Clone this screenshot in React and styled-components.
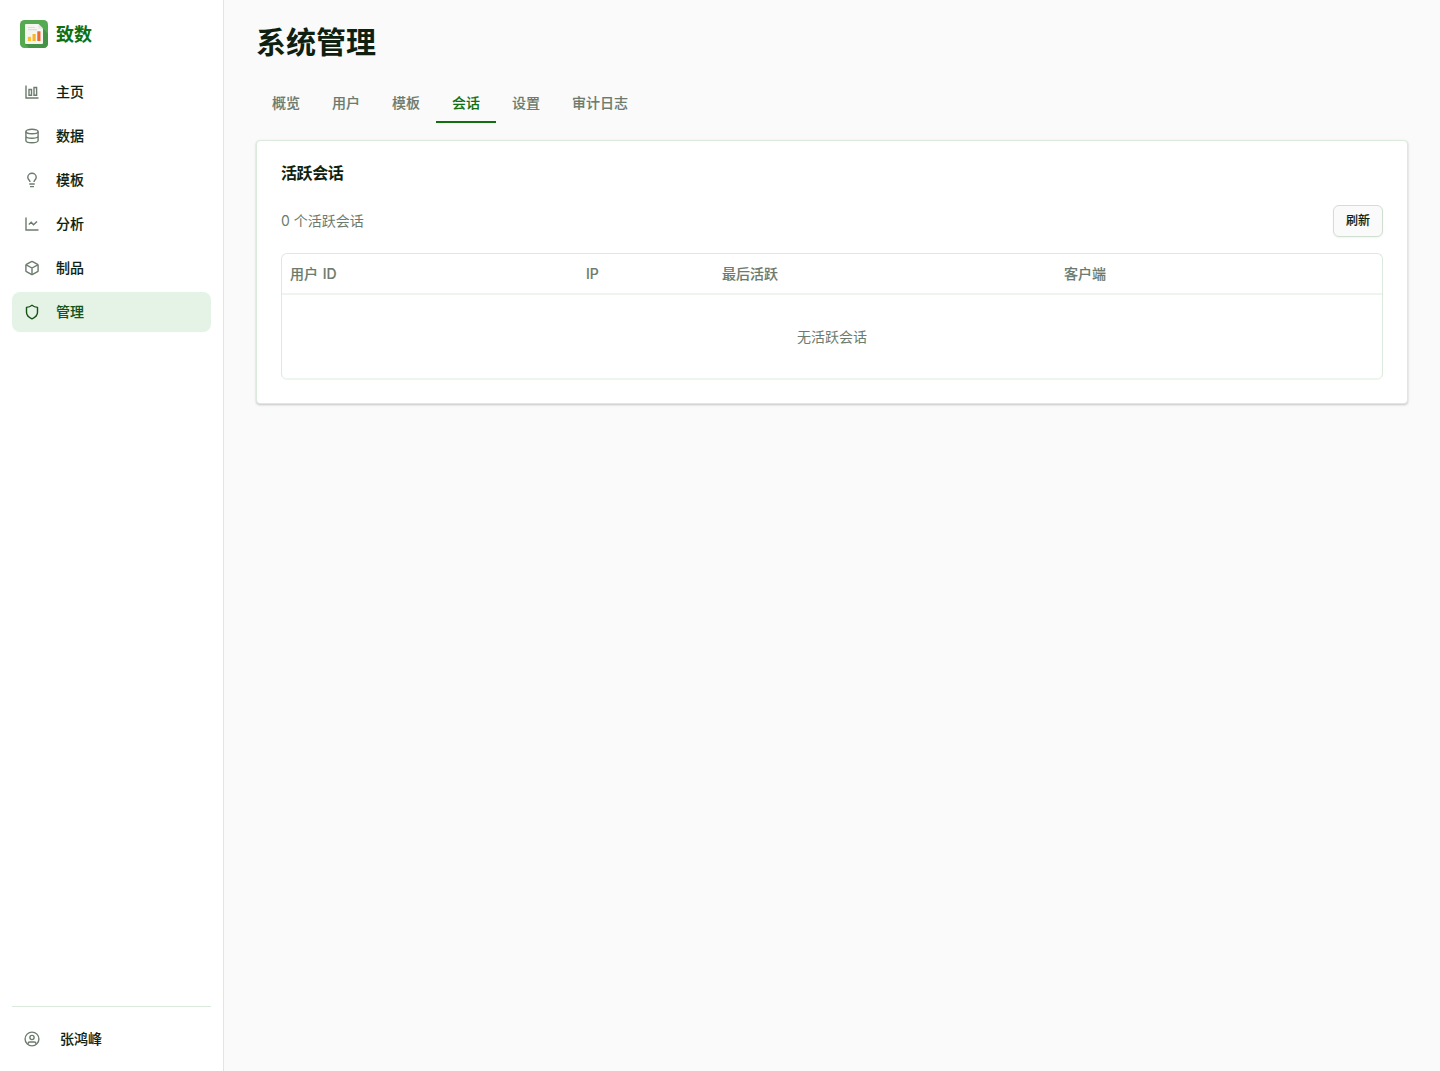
import React from "react";
import styled, { createGlobalStyle } from "styled-components";

const Global = createGlobalStyle`
  *, *::before, *::after { box-sizing: border-box; }
  body {
    margin: 0;
    background: #fafafa;
    color: #0f1f10;
    font-family: Inter, "Noto Sans CJK SC", sans-serif;
    font-size: 14px;
    line-height: 20px;
    -webkit-font-smoothing: antialiased;
  }
`;

const Shell = styled.div`
  display: flex;
  min-height: 100vh;
`;

const Sidebar = styled.aside`
  display: flex;
  flex-direction: column;
  width: 224px;
  flex: none;
  padding: 20px 12px 12px;
  background: #fff;
  border-right: 1px solid #dceadd;
`;

const Brand = styled.div`
  display: flex;
  align-items: center;
  gap: 8px;
  height: 28px;
  padding: 0 8px;
  margin-bottom: 24px;
  color: #107010;
  font-size: 18px;
  font-weight: 700;
`;

const BrandName = styled.span`
  padding-top: 2px;
`;

const Nav = styled.nav`
  display: flex;
  flex-direction: column;
  gap: 4px;
  flex: 1;
`;

const NavItem = styled.a`
  display: flex;
  align-items: center;
  gap: 16px;
  height: 40px;
  padding: 0 12px;
  border-radius: 8px;
  font-weight: 500;
  -webkit-text-stroke: 0.12px currentColor;
  color: ${(p) => (p.$active ? "#155215" : "#0f1f10")};
  background: ${(p) => (p.$active ? "#e4f3e5" : "transparent")};

  svg {
    color: ${(p) => (p.$active ? "#155215" : "#6c7b6d")};
  }
`;

const Account = styled.div`
  display: flex;
  align-items: center;
  gap: 20px;
  height: 53px;
  padding: 12px 12px 0;
  border-top: 1px solid #dceadd;
  font-weight: 500;
  -webkit-text-stroke: 0.12px currentColor;

  svg { color: #6c7b6d; }
`;

const Main = styled.main`
  flex: 1;
  padding: 24px 32px;
`;

const Title = styled.h1`
  margin: 0;
  font-size: 30px;
  line-height: 36px;
  font-weight: 700;
`;

const Tabs = styled.div`
  display: flex;
  margin-top: 24px;
`;

const Tab = styled.div`
  padding: 9px 16px 8px;
  font-weight: 500;
  -webkit-text-stroke: 0.12px currentColor;
  border-bottom: 2px solid ${(p) => (p.$active ? "#107010" : "transparent")};
  color: ${(p) => (p.$active ? "#107010" : "#6c7b6d")};
`;

const Card = styled.section`
  margin-top: 17px;
  height: 264px;
  padding: 24px;
  background: #fff;
  border: 1px solid #dceadd;
  border-radius: 4px;
  box-shadow: 0 1px 3px rgba(0, 0, 0, 0.1), 0 1px 2px rgba(0, 0, 0, 0.12);
`;

const CardTitle = styled.h2`
  margin: 0;
  font-size: 16px;
  line-height: 16px;
  font-weight: 600;
  letter-spacing: -0.4px;
`;

const Toolbar = styled.div`
  display: flex;
  align-items: center;
  justify-content: space-between;
  margin: 24px 0 16px;
  color: #6c7b6d;
`;

const Button = styled.button`
  height: 32px;
  width: 50px;
  padding: 0;
  border: 1px solid #cfe0d0;
  border-radius: 6px;
  background: #fafafa;
  color: #0f1f10;
  font: 500 12px/16px Inter, "Noto Sans CJK SC", sans-serif;
  -webkit-text-stroke: 0.12px currentColor;
  box-shadow: 0 1px 2px rgba(0, 0, 0, 0.05);
`;

const Table = styled.div`
  border: 1px solid #dceadd;
  border-bottom: 2px solid #eef5ee;
  border-radius: 6px;
  color: #6c7b6d;
`;

const HeadRow = styled.div`
  display: grid;
  grid-template-columns: 296px 136px 342px 1fr;
  height: 41px;
  border-bottom: 2px solid #eef5ee;
  font-weight: 500;
  -webkit-text-stroke: 0.12px currentColor;
  word-spacing: 1px;
`;

const HeadCell = styled.div`
  display: flex;
  align-items: center;
  padding: 0 8px;
`;

const Empty = styled.div`
  display: flex;
  align-items: center;
  justify-content: center;
  height: 83px;
`;

const Logo = () => (
  <svg width="28" height="28" viewBox="0 0 28 28">
    <rect width="28" height="28" rx="4.5" fill="#55a951" />
    <path d="M22.500 8l5.500 5.500v10a4.500 4.500 0 0 1-4.500 4.500H9l-4-4z" fill="#459445" />
    <path d="M6 4h12.500l4.500 4.500V23a1 1 0 0 1-1 1H6a1 1 0 0 1-1-1V5a1 1 0 0 1 1-1z" fill="#f5f5f2" />
    <path d="M18.500 4l4.500 4.500h-4.500z" fill="#dfe6dc" />
    <path d="M8 7.500h7M8 9.700h9" stroke="#dcdcda" strokeWidth="1.200" />
    <rect x="7.800" y="16.800" width="3.200" height="4.200" fill="#fbc02d" />
    <rect x="12.500" y="14" width="3.200" height="7" fill="#f9b52a" />
    <rect x="17.300" y="11.300" width="3.200" height="9.700" fill="#e96a35" />
  </svg>
);

const Icon = styled.svg.attrs({
  width: 16,
  height: 16,
  viewBox: "0 0 16 16",
  fill: "none",
  stroke: "currentColor",
  strokeWidth: 1.4,
})`
  flex: none;
`;

const BarsIcon = () => (
  <Icon>
    <path d="M2 1.500V14h12.500" />
    <path d="M5 5.500h2.500v5.800H5zM10 3.500h2.600v7.800H10z" />
  </Icon>
);

const DatabaseIcon = () => (
  <Icon>
    <ellipse cx="8" cy="3.500" rx="6.100" ry="2.200" />
    <path d="M1.900 3.500v9c0 1.200 2.700 2.200 6.100 2.200s6.100-1 6.100-2.200v-9M1.900 8c0 1.200 2.700 2.200 6.100 2.200s6.100-1 6.100-2.200" />
  </Icon>
);

const BulbIcon = () => (
  <Icon>
    <path d="M6 9.900C6 8.200 3.800 7.700 3.800 5.200a4.200 3.900 0 0 1 8.400 0c0 2.500-2.200 3-2.200 4.700" />
    <path d="M5.300 12h5.400M6 14.600h4" />
  </Icon>
);

const TrendIcon = () => (
  <Icon>
    <path d="M2 1.500V14h12.500" />
    <path d="M4.800 8.500l2.400-2.200 2.300 2.500L13 5.400" />
  </Icon>
);

const BoxIcon = () => (
  <Icon strokeLinejoin="round">
    <path d="M7.400 1.600a1.200 1.200 0 0 1 1.200 0l5 2.800a1 1 0 0 1 .5.900v5.400a1 1 0 0 1-.5.900l-5 2.800a1.200 1.200 0 0 1-1.200 0l-5-2.800a1 1 0 0 1-.5-.9V5.300a1 1 0 0 1 .5-.9z" />
    <path d="M2.200 4.800L8 8l5.800-3.200M8 8v6.500" />
  </Icon>
);

const ShieldIcon = () => (
  <Icon strokeLinejoin="round">
    <path d="M8 1.200c1.500 1.200 3.500 2 5.500 2.200v4.800c0 3-2.300 5.200-5.500 6.600-3.200-1.400-5.500-3.600-5.500-6.600V3.400c2-.2 4-1 5.500-2.200z" />
  </Icon>
);

const UserIcon = () => (
  <Icon>
    <circle cx="8" cy="8" r="6.900" />
    <circle cx="8" cy="6.500" r="2.100" />
    <path d="M4 13.300v-.6c0-1 .8-1.700 1.800-1.700h4.400c1 0 1.800.7 1.800 1.700v.6" />
  </Icon>
);

const NAV = [
  ["主页", BarsIcon],
  ["数据", DatabaseIcon],
  ["模板", BulbIcon],
  ["分析", TrendIcon],
  ["制品", BoxIcon],
  ["管理", ShieldIcon],
];
const TABS = ["概览", "用户", "模板", "会话", "设置", "审计日志"];
const COLUMNS = ["用户 ID", "IP", "最后活跃", "客户端"];

export default function App() {
  return (
    <Shell>
      <Global />
      <Sidebar>
        <Brand><Logo /><BrandName>致数</BrandName></Brand>
        <Nav>
          {NAV.map(([label, Glyph]) => (
            <NavItem key={label} $active={label === "管理"}><Glyph />{label}</NavItem>
          ))}
        </Nav>
        <Account><UserIcon />张鸿峰</Account>
      </Sidebar>
      <Main>
        <Title>系统管理</Title>
        <Tabs>{TABS.map((t) => <Tab key={t} $active={t === "会话"}>{t}</Tab>)}</Tabs>
        <Card>
          <CardTitle>活跃会话</CardTitle>
          <Toolbar><span>0 个活跃会话</span><Button>刷新</Button></Toolbar>
          <Table>
            <HeadRow>{COLUMNS.map((c) => <HeadCell key={c}>{c}</HeadCell>)}</HeadRow>
            <Empty>无活跃会话</Empty>
          </Table>
        </Card>
      </Main>
    </Shell>
  );
}
